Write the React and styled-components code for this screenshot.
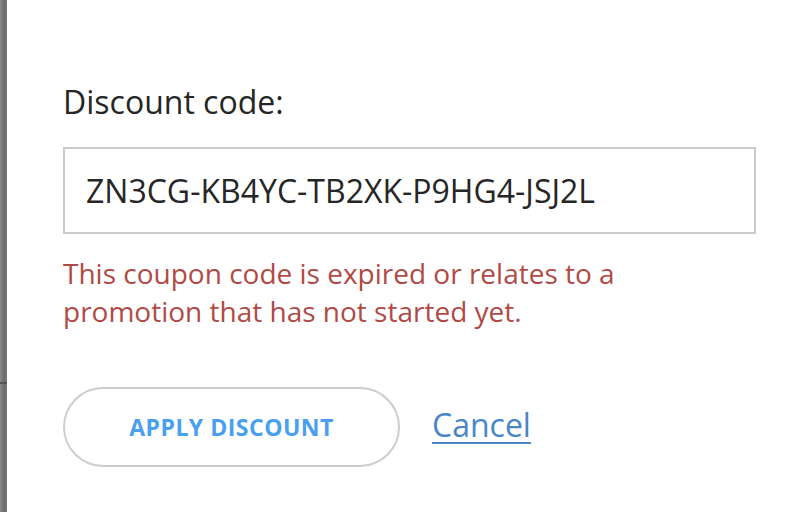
import React from "react";
import styled, { createGlobalStyle } from "styled-components";

const Global = createGlobalStyle`
  html, body { margin: 0; padding: 0; background: #fff; }
  body { font-family: "Open Sans", "Liberation Sans", sans-serif; }
`;

const Page = styled.div`
  display: flex;
  width: 802px;
  height: 512px;
  overflow: hidden;
`;

const Edge = styled.div`
  width: 7px;
  flex: none;
  background: linear-gradient(to right, #8a8a8a, #6a6a6a 60%, #7a7a7a);
  position: relative;
  &::after {
    content: "";
    position: absolute;
    left: 0;
    right: 0;
    top: 382px;
    height: 2px;
    background: #555;
  }
`;

const Form = styled.div`
  flex: 1;
  padding: 80px 0 0 56px;
  display: flex;
  flex-direction: column;
`;

const Label = styled.label`
  font-size: 32px;
  line-height: 44px;
  color: #262626;
`;

const Input = styled.input`
  box-sizing: border-box;
  margin-top: 23px;
  width: 693px;
  height: 87px;
  border: 2px solid #cbcbcb;
  border-radius: 0;
  padding: 0 0 0 21px;
  font-family: inherit;
  font-size: 32px;
  color: #262626;
  outline: none;
`;

const Error = styled.p`
  margin: 20px 0 0;
  width: 600px;
  font-size: 28px;
  line-height: 38px;
  color: #b04a47;
`;

const Actions = styled.div`
  display: flex;
  align-items: center;
  gap: 32px;
  margin-top: 57px;
`;

const Button = styled.button`
  box-sizing: border-box;
  width: 337px;
  height: 80px;
  border: 2px solid #cdcdcd;
  border-radius: 40px;
  background: #fff;
  font-family: inherit;
  font-weight: 700;
  font-size: 23px;
  color: #4aa0ee;
  letter-spacing: 0.5px;
`;

const Link = styled.a`
  margin-bottom: 6px;
  font-size: 32px;
  color: #4a86c5;
  text-decoration: underline;
  text-underline-offset: 5px;
  text-decoration-thickness: 2px;
`;

export default function App() {
  return (
    <Page>
      <Global />
      <Edge />
      <Form>
        <Label>Discount code:</Label>
        <Input defaultValue="ZN3CG-KB4YC-TB2XK-P9HG4-JSJ2L" />
        <Error>
          This coupon code is expired or relates to a promotion that has not started yet.
        </Error>
        <Actions>
          <Button>APPLY DISCOUNT</Button>
          <Link href="#">Cancel</Link>
        </Actions>
      </Form>
    </Page>
  );
}
